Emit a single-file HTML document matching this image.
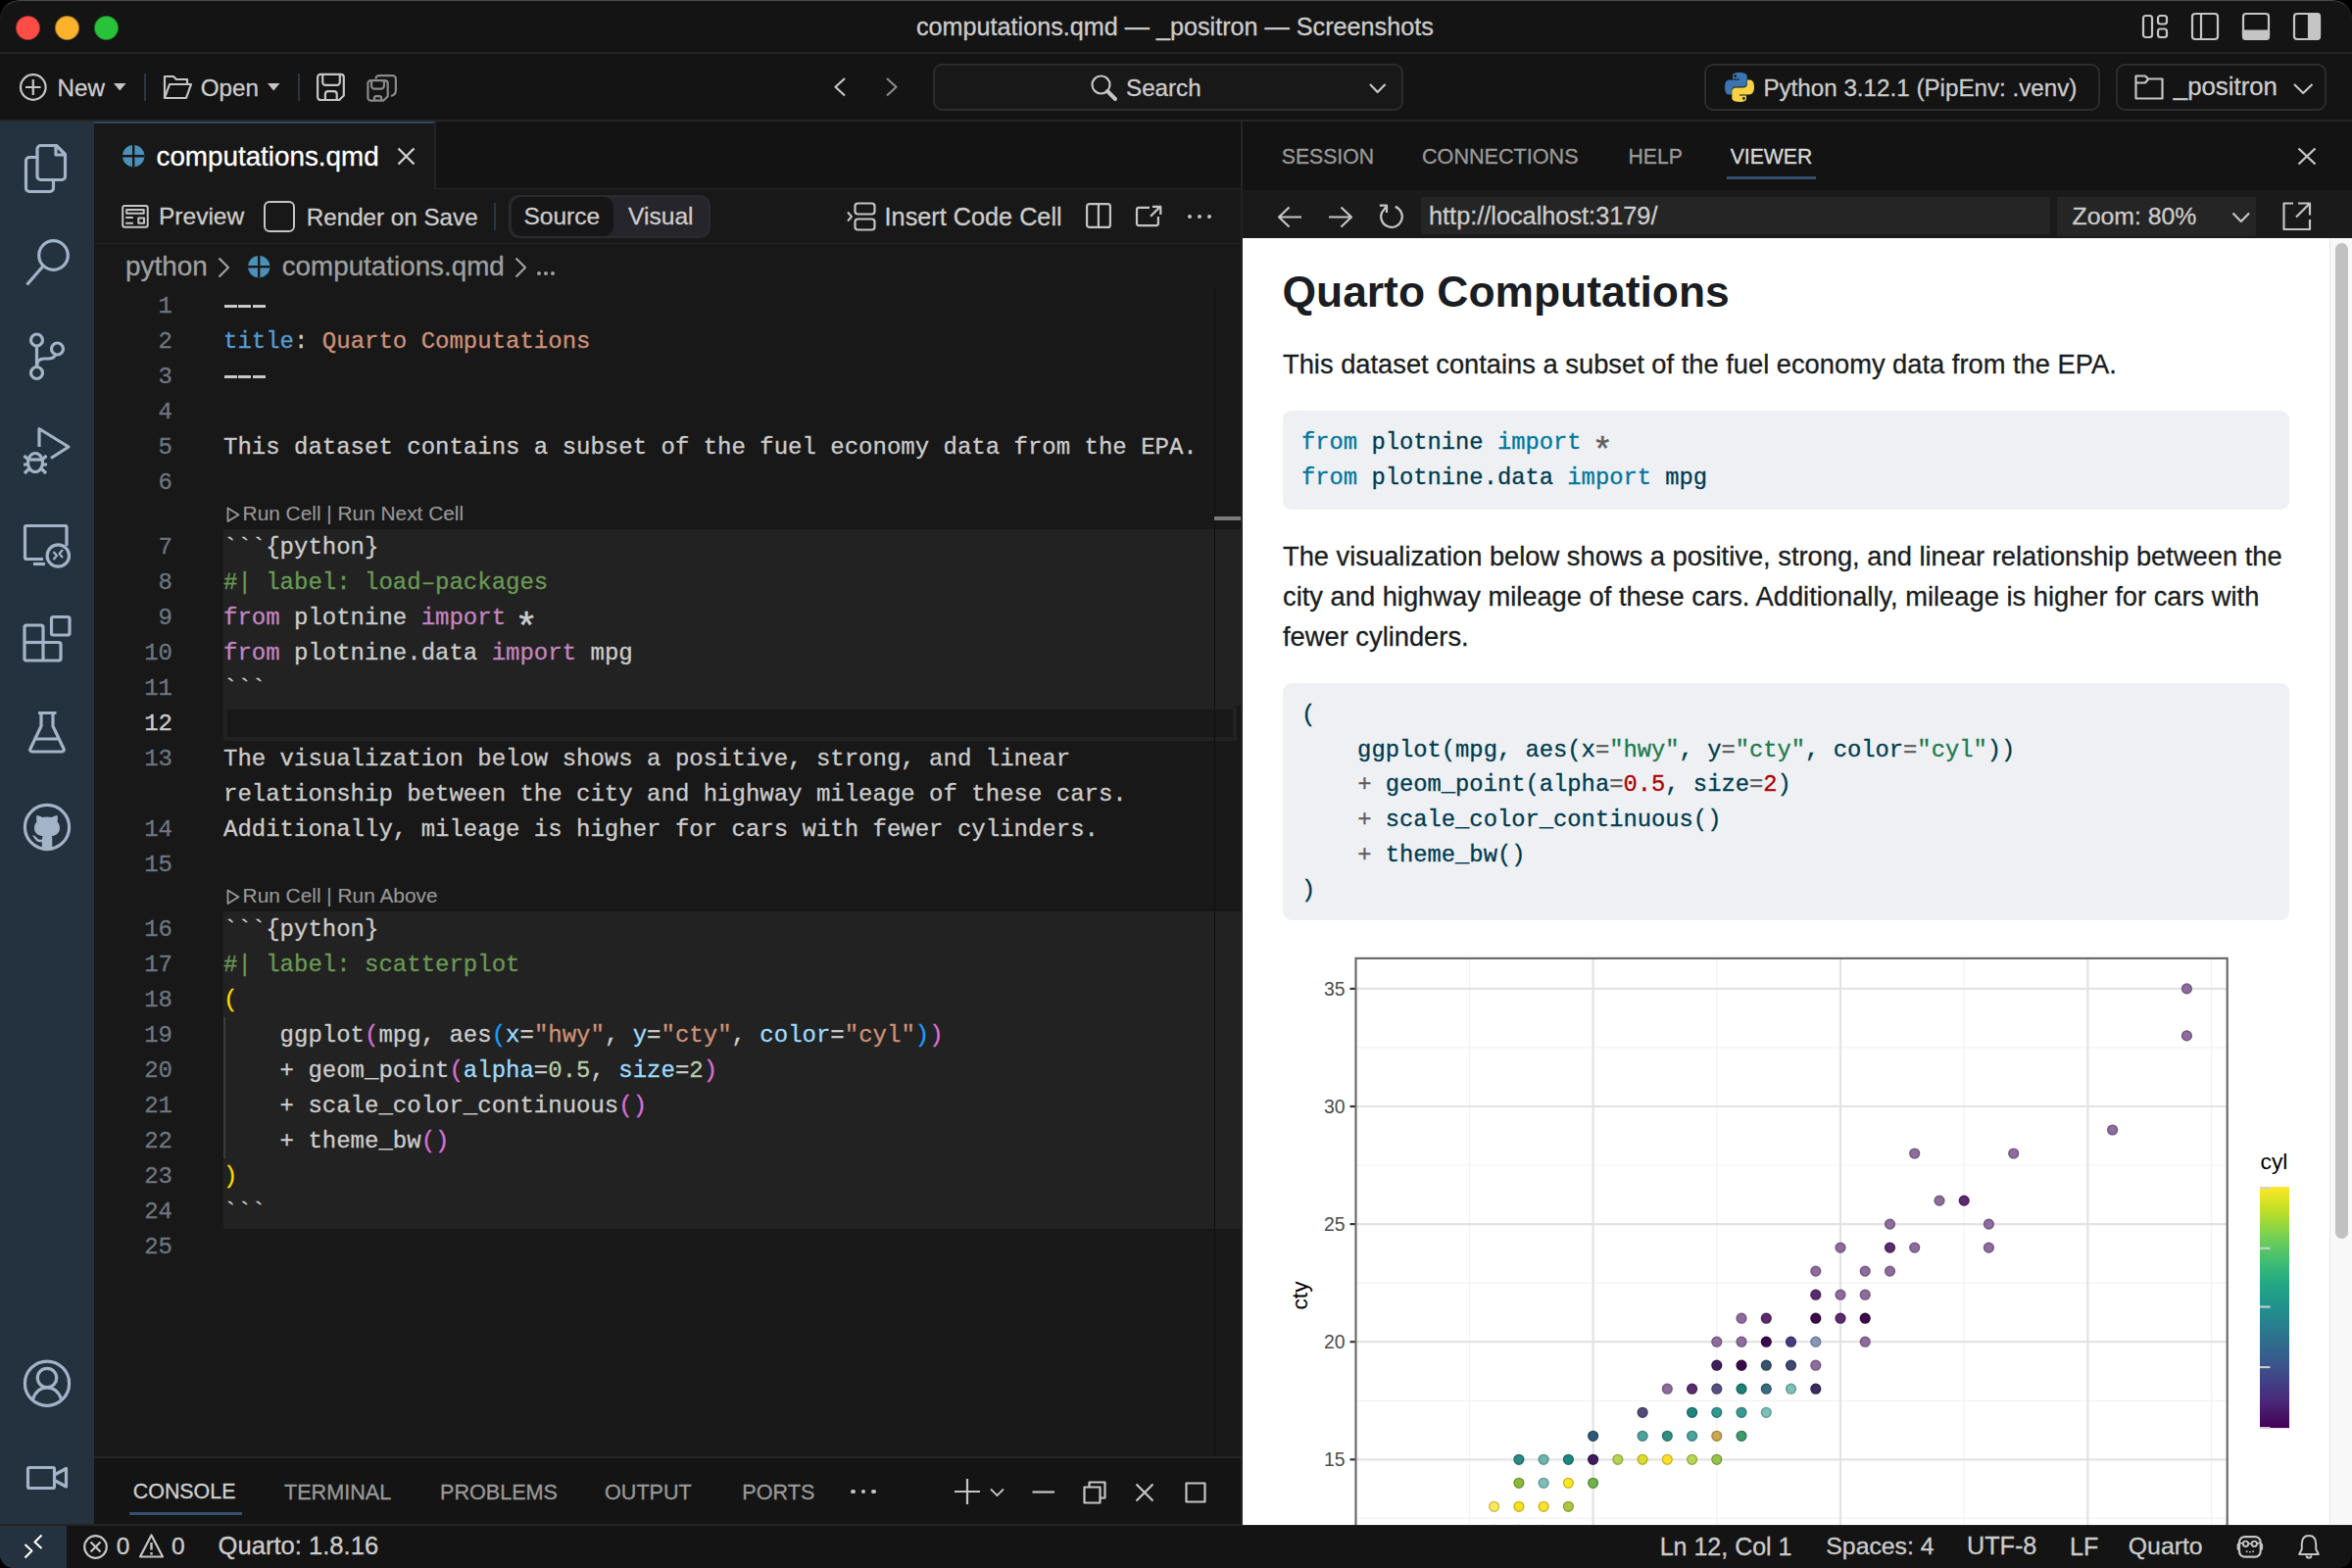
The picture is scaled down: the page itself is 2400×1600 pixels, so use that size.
<!DOCTYPE html>
<html><head><meta charset="utf-8">
<style>
*{box-sizing:border-box;margin:0;padding:0}
html,body{width:2400px;height:1600px;overflow:hidden;background:#000;font-family:"Liberation Sans",sans-serif}
.win{position:absolute;left:0;top:0;width:2400px;height:1600px;border-radius:20px 20px 14px 14px;overflow:hidden;background:#141414}
.wb{position:absolute;left:0;top:0;width:2400px;height:40px;border-radius:20px 20px 0 0;border-top:1.5px solid #4a4a4a;z-index:5;pointer-events:none}
.a{position:absolute}
.t{position:absolute;white-space:pre;line-height:1;-webkit-text-stroke:0.3px currentColor}
svg{position:absolute;overflow:visible}
.ic{fill:none;stroke:#c5c5c5;stroke-width:2.2;stroke-linecap:butt;stroke-linejoin:round}
.ab{fill:none;stroke:#a3b4c6;stroke-width:3.2;stroke-linecap:butt;stroke-linejoin:round}
.k{color:#c586c0}.s{color:#ce9178}.c{color:#6a9955}.p{color:#9cdcfe}.n{color:#b5cea8}.y{color:#569cd6}
.b1{color:#ffd700}.b2{color:#da70d6}.b3{color:#179fff}
.vk{color:#00769e}.vo{color:#5e5e5e}.vs{color:#20794d}.vn{color:#ad0000}
</style></head><body>
<div class="win">

<div class="wb"></div>
<div class="a" style="left:0px;top:0px;width:2400px;height:55px;background:#141414"></div>
<div class="a" style="left:0px;top:53px;width:2400px;height:2px;background:#242424"></div>
<div class="a" style="left:15.5px;top:15.5px;width:25px;height:25px;border-radius:50%;background:#fe4c47;border:0.8px solid rgba(0,0,0,0.35)"></div>
<div class="a" style="left:55.5px;top:15.5px;width:25px;height:25px;border-radius:50%;background:#fdb22b;border:0.8px solid rgba(0,0,0,0.35)"></div>
<div class="a" style="left:95.5px;top:15.5px;width:25px;height:25px;border-radius:50%;background:#28c33b;border:0.8px solid rgba(0,0,0,0.35)"></div>
<div class="t" style="left:935.0px;top:14.9px;font-size:25.2px;color:#cccccc;font-weight:normal;font-family:'Liberation Sans',sans-serif;">computations.qmd — _positron — Screenshots</div>
<svg class="ic" style="left:2186px;top:15px" width="26" height="24" viewBox="0 0 26 24"><rect x="1" y="1" width="9" height="22" rx="2.5"/><rect x="16" y="1" width="9" height="8.5" rx="2.5"/><rect x="16" y="14.5" width="9" height="8.5" rx="2.5"/></svg>
<svg class="ic" style="left:2236px;top:13px" width="28" height="28" viewBox="0 0 28 28"><rect x="1" y="1" width="26" height="26" rx="3"/><line x1="10" y1="1" x2="10" y2="27"/></svg>
<svg class="ic" style="left:2288px;top:13px" width="28" height="28" viewBox="0 0 28 28"><rect x="1" y="1" width="26" height="26" rx="3"/><path d="M1 18.5 H27 V24 a3 3 0 0 1 -3 3 H4 a3 3 0 0 1 -3 -3 Z" fill="#c5c5c5"/></svg>
<svg class="ic" style="left:2340px;top:13px" width="28" height="28" viewBox="0 0 28 28"><rect x="1" y="1" width="26" height="26" rx="3"/><path d="M16 1 H24 a3 3 0 0 1 3 3 V24 a3 3 0 0 1 -3 3 H16 Z" fill="#c5c5c5"/></svg>
<div class="a" style="left:0px;top:55px;width:2400px;height:68px;background:#141414"></div>
<div class="a" style="left:0px;top:122px;width:2400px;height:2px;background:#252525"></div>
<svg class="ic" style="left:19px;top:74px" width="30" height="30" viewBox="0 0 30 30"><circle cx="14.8" cy="15" r="12.8"/><line x1="14.8" y1="7" x2="14.8" y2="23"/><line x1="7" y1="15" x2="22.6" y2="15"/></svg>
<div class="t" style="left:58.5px;top:77.5px;font-size:24.2px;color:#cccccc;font-weight:normal;font-family:'Liberation Sans',sans-serif;">New</div>
<svg class="ic" style="left:116px;top:85px" width="13" height="8" viewBox="0 0 13 8"><path d="M0 0 H12.5 L6.25 7.5 Z" fill="#c5c5c5" stroke="none"/></svg>
<div class="a" style="left:147px;top:75px;width:2px;height:28px;background:#2b3540"></div>
<svg class="ic" style="left:166px;top:76px" width="30" height="26" viewBox="0 0 30 26"><path d="M2 24 V2 H11 L14 5 H25 V9"/><path d="M2 24 L7 10 H29 L24 24 Z"/></svg>
<div class="t" style="left:204.7px;top:77.5px;font-size:24.2px;color:#cccccc;font-weight:normal;font-family:'Liberation Sans',sans-serif;">Open</div>
<svg class="ic" style="left:273px;top:85px" width="13" height="8" viewBox="0 0 13 8"><path d="M0 0 H12.5 L6.25 7.5 Z" fill="#c5c5c5" stroke="none"/></svg>
<div class="a" style="left:304px;top:75px;width:2px;height:28px;background:#2b3540"></div>
<svg class="ic" style="left:323px;top:74px" width="30" height="30" viewBox="0 0 30 30"><path d="M4.1 1.9 H24.8 a3 3 0 0 1 3 3 V23.5 L23.2 28 H4.1 a3 3 0 0 1 -3 -3 V4.9 a3 3 0 0 1 3 -3 Z"/><path d="M6.2 1.9 V9.8 a3 3 0 0 0 3 3 H20.8 a3 3 0 0 0 3 -3 V1.9"/><path d="M8.9 28 V22.2 a3 3 0 0 1 3 -3 H17.7 a3 3 0 0 1 3 3 V28"/></svg>
<svg class="ic" style="left:373px;top:74px" width="34" height="30" viewBox="0 0 34 30"><g stroke="#8a8a8a"><path d="M5.4 8.2 H19.7 a3 3 0 0 1 3 3 V24.2 L18.2 28.7 H5.4 a3 3 0 0 1 -3 -3 V11.2 a3 3 0 0 1 3 -3 Z"/><path d="M6.1 8.2 V13.6 a3 3 0 0 0 3 3 H15.9 a3 3 0 0 0 3 -3 V8.2"/><path d="M9 28.7 V26.1 a2 2 0 0 1 2 -2 H14.1 a2 2 0 0 1 2 2 V28.7"/><path d="M10.4 6.5 a3.5 3.5 0 0 1 3.5 -3.4 H27.4 a3.5 3.5 0 0 1 3.5 3.5 V18 a6 6 0 0 1 -4.8 5.8"/></g></svg>
<svg class="ic" style="left:851px;top:79px" width="12" height="20" viewBox="0 0 12 20"><path d="M11 1 L1.5 9.7 L11 18.5"/></svg>
<svg class="ic" style="left:904px;top:79px" width="12" height="20" viewBox="0 0 12 20"><path d="M1 1 L10.5 9.7 L1 18.5" stroke="#8a8a8a"/></svg>
<div class="a" style="left:952px;top:65px;width:480px;height:48px;border:2px solid #2c2c2c;border-radius:9px;background:#181818"></div>
<svg class="ic" style="left:1113px;top:76px" width="27" height="26" viewBox="0 0 27 26"><circle cx="10.5" cy="10.5" r="9"/><line x1="17" y1="17" x2="25" y2="25" stroke-width="4" stroke-linecap="round"/></svg>
<div class="t" style="left:1149.0px;top:77.9px;font-size:24.2px;color:#cccccc;font-weight:normal;font-family:'Liberation Sans',sans-serif;">Search</div>
<svg class="ic" style="left:1397px;top:85px" width="18" height="10" viewBox="0 0 18 10"><path d="M1 1 L8.7 9 L16.5 1"/></svg>
<div class="a" style="left:1739px;top:65px;width:404px;height:48px;border:2px solid #2c2c2c;border-radius:9px"></div>
<svg style="left:1759px;top:73px" width="32" height="32" viewBox="0 0 32 32">
<path d="M15.7 1 C8.5 1 9 4.2 9 4.2 V7.6 H16 V8.6 H6 C6 8.6 1 8 1 15.9 C1 23.8 5.4 23.5 5.4 23.5 H8 V19.8 C8 19.8 7.9 15.5 12.3 15.5 H19.6 C19.6 15.5 23.7 15.6 23.7 11.5 V4.8 C23.7 4.8 24.3 1 15.7 1 Z M11.6 3.3 A1.3 1.3 0 1 1 11.6 5.9 A1.3 1.3 0 1 1 11.6 3.3 Z" fill="#3a75b0"/>
<path d="M16.3 31 C23.5 31 23 27.8 23 27.8 V24.4 H16 V23.4 H26 C26 23.4 31 24 31 16.1 C31 8.2 26.6 8.5 26.6 8.5 H24 V12.2 C24 12.2 24.1 16.5 19.7 16.5 H12.4 C12.4 16.5 8.3 16.4 8.3 20.5 V27.2 C8.3 27.2 7.7 31 16.3 31 Z M20.4 28.7 A1.3 1.3 0 1 1 20.4 26.1 A1.3 1.3 0 1 1 20.4 28.7 Z" fill="#f7d244"/>
</svg>
<div class="t" style="left:1799.4px;top:77.7px;font-size:24.2px;color:#cccccc;font-weight:normal;font-family:'Liberation Sans',sans-serif;">Python 3.12.1 (PipEnv: .venv)</div>
<div class="a" style="left:2159px;top:65px;width:215px;height:48px;border:2px solid #2c2c2c;border-radius:9px"></div>
<svg class="ic" style="left:2178px;top:76px" width="30" height="26" viewBox="0 0 30 26"><path d="M1.5 24.5 V1.5 H11 L14 4.5 H28.5 V24.5 Z"/><path d="M1.5 8.5 H11 L14 5"/></svg>
<div class="t" style="left:2217.8px;top:75.9px;font-size:25.8px;color:#cccccc;font-weight:normal;font-family:'Liberation Sans',sans-serif;">_positron</div>
<svg class="ic" style="left:2340px;top:85px" width="21" height="11" viewBox="0 0 21 11"><path d="M1 1 L10.2 10 L19.5 1"/></svg>
<div class="a" style="left:0px;top:124px;width:96px;height:1432px;background:#24313f"></div>
<svg class="ab" style="left:0px;top:0px" width="96" height="1600" viewBox="0 0 96 1600">
<path d="M38 160.5 H30 a3.5 3.5 0 0 0 -3.5 3.5 V192 a3.5 3.5 0 0 0 3.5 3.5 H51 a3.5 3.5 0 0 0 3.5 -3.5 V183.5"/>
<path d="M41.5 148.5 H57.5 L66.5 157.5 V180 a3.5 3.5 0 0 1 -3.5 3.5 H41.5 a3.5 3.5 0 0 1 -3.5 -3.5 V152 a3.5 3.5 0 0 1 3.5 -3.5 Z"/>
<path d="M57 149 V158 H66"/>
<circle cx="54.5" cy="260.5" r="14.8"/><line x1="44" y1="271.5" x2="27.5" y2="290.5"/>
<circle cx="37.5" cy="347" r="6"/><circle cx="58.5" cy="356" r="6"/><circle cx="37.5" cy="380.5" r="6"/>
<line x1="37.5" y1="353" x2="37.5" y2="374.5"/><path d="M37.5 374 C37.5 369 40 366 45 366 H49 C53 366 56 364 57 361.5"/>
<path d="M40 456 V437.5 L70 456 L52 467.5"/>
<ellipse cx="36" cy="472" rx="7.5" ry="9.5"/><line x1="28.5" y1="469" x2="43.5" y2="469"/>
<path d="M24.5 465 L29 469 M47.5 465 L43 469 M24 474 H28.5 M48 474 H43.5 M25 483 L29.5 478.5 M47 483 L42.5 478.5"/>
<path d="M68 557 V538 a1.5 1.5 0 0 0 -1.5 -1.5 H27 a1.5 1.5 0 0 0 -1.5 1.5 V569 a1.5 1.5 0 0 0 1.5 1.5 H44"/>
<line x1="34" y1="575.5" x2="46" y2="575.5"/>
<circle cx="59.3" cy="567" r="11.2"/>
<path d="M54.5 563 L58 567 L54.5 571 M64 561 L60.5 565 L64 569" stroke-width="2.2"/>
<path d="M26 638 H42 a2 2 0 0 1 2 2 V655.5 H60 a2 2 0 0 1 2 2 V672 a2 2 0 0 1 -2 2 H27 a2 2 0 0 1 -2 -2 V640 a2 2 0 0 1 2 -2 Z"/>
<line x1="25" y1="655.5" x2="44" y2="655.5"/><line x1="44" y1="655.5" x2="44" y2="674"/>
<rect x="52.5" y="629.5" width="18.5" height="18.5" rx="2"/>
<path d="M39 727.5 H57.5 M42 727.5 V741 L31 764 a2 2 0 0 0 1.8 3 H63.2 a2 2 0 0 0 1.8 -3 L54 741 V727.5 M35 754 H61"/>
<circle cx="48" cy="844" r="22.6"/>
<circle cx="48" cy="1411.7" r="22.6"/><circle cx="48" cy="1406" r="9.7"/>
<path d="M33.5 1428 C36 1420 41.5 1416 48 1416 C54.5 1416 60 1420 62.5 1428"/>
<rect x="28.5" y="1497.5" width="27" height="21" rx="1.5"/><path d="M55.5 1505 L67.5 1498.5 V1517 L55.5 1510.5"/>
</svg>
<svg style="left:0;top:0" width="96" height="1600" viewBox="0 0 96 1600"><path fill="#a3b4c6" d="M37.5 838.5 C37 836 37 833.5 37.5 832 C39.5 832.3 41.5 833 43 834 C46.3 833.3 49.7 833.3 53 834 C54.5 833 56.5 832.3 58.5 832 C59 833.5 59 836 58.5 838.5 C60.3 840.3 61 842.5 61 845 C61 850 57.5 852.5 52.5 853.3 C53.2 854 53.3 855 53.3 856.5 V866 H42.8 V859.3 C40 859.6 37.5 859 35.8 856.6 C34.8 855 33.8 853 32.9 852.5 C35 852 36.5 853.5 37.7 855 C38.8 856.5 40.5 857 42.8 856.8 C43 855 43.5 854 43.8 853.3 C38.5 852.5 35 850 35 845 C35 842.5 35.8 840.3 37.5 838.5 Z"/></svg>
<div class="a" style="left:96px;top:124px;width:1170px;height:70px;background:#131313"></div>
<div class="a" style="left:443px;top:124px;width:823px;height:70px;border-left:2px solid #222222;border-bottom:2px solid #242424"></div>
<div class="a" style="left:96px;top:124px;width:347px;height:70px;background:#181818"></div>
<div class="a" style="left:96px;top:124px;width:347px;height:2px;background:#2d4661"></div>
<svg style="left:125px;top:148px" width="22.4" height="22.4" viewBox="0 0 22.4 22.4"><circle cx="11.2" cy="11.2" r="11.2" fill="#4a90b8"/><line x1="11.2" y1="0" x2="11.2" y2="22.4" stroke="#181818" stroke-width="2.4"/><line x1="0" y1="11.2" x2="22.4" y2="11.2" stroke="#181818" stroke-width="2.4"/></svg>
<div class="t" style="left:159.5px;top:145.8px;font-size:27.8px;color:#ffffff;font-weight:normal;font-family:'Liberation Sans',sans-serif;">computations.qmd</div>
<svg class="ic" style="left:405px;top:150px" width="19" height="19" viewBox="0 0 19 19"><path d="M1.5 1.5 L17.5 17.5 M17.5 1.5 L1.5 17.5" stroke="#d0d0d0" stroke-width="2.4"/></svg>
<div class="a" style="left:96px;top:193px;width:1170px;height:56px;background:#181818"></div>
<div class="a" style="left:96px;top:248px;width:1170px;height:2px;background:#242424"></div>
<svg class="ic" style="left:123px;top:208px" width="30" height="26" viewBox="0 0 30 26"><rect x="2.2" y="2" width="25.5" height="21.8" rx="2" stroke-width="2"/><rect x="6.2" y="5.9" width="17.5" height="3.9" stroke-width="2"/><path d="M5.2 14 H12.9 M5.2 19.7 H12.9" stroke-width="2"/><rect x="18.3" y="14.4" width="5.7" height="5.4" stroke-width="2"/></svg>
<div class="t" style="left:162.0px;top:209.3px;font-size:24.5px;color:#cccccc;font-weight:normal;font-family:'Liberation Sans',sans-serif;">Preview</div>
<div class="a" style="left:269px;top:205px;width:32px;height:32px;border:2.2px solid #c5c5c5;border-radius:6px"></div>
<div class="t" style="left:312.8px;top:209.5px;font-size:24.2px;color:#cccccc;font-weight:normal;font-family:'Liberation Sans',sans-serif;">Render on Save</div>
<div class="a" style="left:503.5px;top:207px;width:2px;height:28px;background:#2b3540"></div>
<div class="a" style="left:519px;top:199px;width:206px;height:44px;background:#25252b;border:2px solid #2a2a30;border-radius:11px"></div>
<div class="a" style="left:522px;top:201px;width:104px;height:40px;background:#161616;border-radius:10px"></div>
<div class="t" style="left:534.4px;top:209.2px;font-size:24.55px;color:#cccccc;font-weight:normal;font-family:'Liberation Sans',sans-serif;">Source</div>
<div class="t" style="left:641.0px;top:209.2px;font-size:24.6px;color:#cccccc;font-weight:normal;font-family:'Liberation Sans',sans-serif;">Visual</div>
<svg class="ic" style="left:863px;top:206px" width="32" height="30" viewBox="0 0 32 30"><path d="M2 10.5 L6 15 L2 19.5" stroke-width="2"/><rect x="9.5" y="1.5" width="20" height="11" rx="3"/><rect x="9.5" y="17.5" width="20" height="11" rx="3"/></svg>
<div class="t" style="left:902.6px;top:208.6px;font-size:25.25px;color:#cccccc;font-weight:normal;font-family:'Liberation Sans',sans-serif;">Insert Code Cell</div>
<svg class="ic" style="left:1108px;top:207px" width="26" height="26" viewBox="0 0 26 26"><rect x="1.1" y="1.1" width="23.8" height="23.8" rx="2.5"/><line x1="12.9" y1="1.1" x2="12.9" y2="24.9"/></svg>
<svg class="ic" style="left:1158px;top:208px" width="28" height="24" viewBox="0 0 28 24"><path d="M15 3.8 H4 a2 2 0 0 0 -2 2 V20.1 a2 2 0 0 0 2 2 H21.9 a2 2 0 0 0 2 -2 V13"/><path d="M16 12.7 L25.8 2.9"/><path d="M17.9 2.9 H26.3 V11"/></svg>
<div class="a" style="left:1211.6px;top:218.8px;width:4.4px;height:4.4px;border-radius:50%;background:#c5c5c5"></div>
<div class="a" style="left:1221.6px;top:218.8px;width:4.4px;height:4.4px;border-radius:50%;background:#c5c5c5"></div>
<div class="a" style="left:1231.7px;top:218.8px;width:4.4px;height:4.4px;border-radius:50%;background:#c5c5c5"></div>
<div class="a" style="left:96px;top:249px;width:1170px;height:1238px;background:#181818"></div>
<div class="t" style="left:128.0px;top:257.9px;font-size:27.9px;color:#a0a0a0;font-weight:normal;font-family:'Liberation Sans',sans-serif;">python</div>
<svg class="ic" style="left:222px;top:262px" width="13" height="22" viewBox="0 0 13 22"><path d="M1.5 1.5 L11 11 L1.5 20.5" stroke="#a0a0a0"/></svg>
<svg style="left:253px;top:260.8px" width="22.4" height="22.4" viewBox="0 0 22.4 22.4"><circle cx="11.2" cy="11.2" r="11.2" fill="#4a90b8"/><line x1="11.2" y1="0" x2="11.2" y2="22.4" stroke="#181818" stroke-width="2.4"/><line x1="0" y1="11.2" x2="22.4" y2="11.2" stroke="#181818" stroke-width="2.4"/></svg>
<div class="t" style="left:287.7px;top:258.0px;font-size:27.8px;color:#a0a0a0;font-weight:normal;font-family:'Liberation Sans',sans-serif;">computations.qmd</div>
<svg class="ic" style="left:525px;top:262px" width="13" height="22" viewBox="0 0 13 22"><path d="M1.5 1.5 L11 11 L1.5 20.5" stroke="#a0a0a0"/></svg>
<div class="a" style="left:548px;top:277px;width:4px;height:4px;border-radius:50%;background:#a0a0a0"></div>
<div class="a" style="left:555px;top:277px;width:4px;height:4px;border-radius:50%;background:#a0a0a0"></div>
<div class="a" style="left:562px;top:277px;width:4px;height:4px;border-radius:50%;background:#a0a0a0"></div>
<div class="a" style="left:228px;top:540px;width:1038px;height:180px;background:#222222"></div>
<div class="a" style="left:228px;top:930px;width:1038px;height:324px;background:#222222"></div>
<div class="a" style="left:228px;top:720px;width:1034px;height:36px;border:4px solid #222222;background:#181818"></div>
<div class="a" style="left:228px;top:1038px;width:2px;height:144px;background:#3c3c3c"></div>
<div class="a" style="left:1238.5px;top:294px;width:1.5px;height:1193px;background:#101010"></div>
<div class="a" style="left:1239px;top:527px;width:27px;height:4px;background:#7a7a7a"></div>
<div class="t" style="left:96px;width:80px;text-align:right;top:301.3px;font-size:24px;font-family:'Liberation Mono',monospace;color:#6e7681">1</div>
<div class="t" style="left:96px;width:80px;text-align:right;top:337.3px;font-size:24px;font-family:'Liberation Mono',monospace;color:#6e7681">2</div>
<div class="t" style="left:96px;width:80px;text-align:right;top:373.3px;font-size:24px;font-family:'Liberation Mono',monospace;color:#6e7681">3</div>
<div class="t" style="left:96px;width:80px;text-align:right;top:409.3px;font-size:24px;font-family:'Liberation Mono',monospace;color:#6e7681">4</div>
<div class="t" style="left:96px;width:80px;text-align:right;top:445.3px;font-size:24px;font-family:'Liberation Mono',monospace;color:#6e7681">5</div>
<div class="t" style="left:96px;width:80px;text-align:right;top:481.3px;font-size:24px;font-family:'Liberation Mono',monospace;color:#6e7681">6</div>
<div class="t" style="left:96px;width:80px;text-align:right;top:547.3px;font-size:24px;font-family:'Liberation Mono',monospace;color:#6e7681">7</div>
<div class="t" style="left:96px;width:80px;text-align:right;top:583.3px;font-size:24px;font-family:'Liberation Mono',monospace;color:#6e7681">8</div>
<div class="t" style="left:96px;width:80px;text-align:right;top:619.3px;font-size:24px;font-family:'Liberation Mono',monospace;color:#6e7681">9</div>
<div class="t" style="left:96px;width:80px;text-align:right;top:655.3px;font-size:24px;font-family:'Liberation Mono',monospace;color:#6e7681">10</div>
<div class="t" style="left:96px;width:80px;text-align:right;top:691.3px;font-size:24px;font-family:'Liberation Mono',monospace;color:#6e7681">11</div>
<div class="t" style="left:96px;width:80px;text-align:right;top:727.3px;font-size:24px;font-family:'Liberation Mono',monospace;color:#cccccc">12</div>
<div class="t" style="left:96px;width:80px;text-align:right;top:763.3px;font-size:24px;font-family:'Liberation Mono',monospace;color:#6e7681">13</div>
<div class="t" style="left:96px;width:80px;text-align:right;top:835.3px;font-size:24px;font-family:'Liberation Mono',monospace;color:#6e7681">14</div>
<div class="t" style="left:96px;width:80px;text-align:right;top:871.3px;font-size:24px;font-family:'Liberation Mono',monospace;color:#6e7681">15</div>
<div class="t" style="left:96px;width:80px;text-align:right;top:937.3px;font-size:24px;font-family:'Liberation Mono',monospace;color:#6e7681">16</div>
<div class="t" style="left:96px;width:80px;text-align:right;top:973.3px;font-size:24px;font-family:'Liberation Mono',monospace;color:#6e7681">17</div>
<div class="t" style="left:96px;width:80px;text-align:right;top:1009.3px;font-size:24px;font-family:'Liberation Mono',monospace;color:#6e7681">18</div>
<div class="t" style="left:96px;width:80px;text-align:right;top:1045.3px;font-size:24px;font-family:'Liberation Mono',monospace;color:#6e7681">19</div>
<div class="t" style="left:96px;width:80px;text-align:right;top:1081.3px;font-size:24px;font-family:'Liberation Mono',monospace;color:#6e7681">20</div>
<div class="t" style="left:96px;width:80px;text-align:right;top:1117.3px;font-size:24px;font-family:'Liberation Mono',monospace;color:#6e7681">21</div>
<div class="t" style="left:96px;width:80px;text-align:right;top:1153.3px;font-size:24px;font-family:'Liberation Mono',monospace;color:#6e7681">22</div>
<div class="t" style="left:96px;width:80px;text-align:right;top:1189.3px;font-size:24px;font-family:'Liberation Mono',monospace;color:#6e7681">23</div>
<div class="t" style="left:96px;width:80px;text-align:right;top:1225.3px;font-size:24px;font-family:'Liberation Mono',monospace;color:#6e7681">24</div>
<div class="t" style="left:96px;width:80px;text-align:right;top:1261.3px;font-size:24px;font-family:'Liberation Mono',monospace;color:#6e7681">25</div>
<div class="a" style="left:228.9px;top:310.8px;width:12.9px;height:3px;background:#c8c8c8"></div>
<div class="a" style="left:243.4px;top:310.8px;width:12.9px;height:3px;background:#c8c8c8"></div>
<div class="a" style="left:258.1px;top:310.8px;width:12.9px;height:3px;background:#c8c8c8"></div>
<div class="a" style="left:228.9px;top:382.8px;width:12.9px;height:3px;background:#c8c8c8"></div>
<div class="a" style="left:243.4px;top:382.8px;width:12.9px;height:3px;background:#c8c8c8"></div>
<div class="a" style="left:258.1px;top:382.8px;width:12.9px;height:3px;background:#c8c8c8"></div>
<div class="t" style="left:228px;top:301.3px;font-size:24px;font-family:'Liberation Mono',monospace;color:#cccccc"></div>
<div class="t" style="left:228px;top:337.3px;font-size:24px;font-family:'Liberation Mono',monospace;color:#cccccc"><span class="y">title</span>: <span class="s">Quarto Computations</span></div>
<div class="t" style="left:228px;top:373.3px;font-size:24px;font-family:'Liberation Mono',monospace;color:#cccccc"></div>
<div class="t" style="left:228px;top:445.3px;font-size:24px;font-family:'Liberation Mono',monospace;color:#cccccc">This dataset contains a subset of the fuel economy data from the EPA.</div>
<div class="t" style="left:228px;top:547.3px;font-size:24px;font-family:'Liberation Mono',monospace;color:#cccccc">```{python}</div>
<div class="t" style="left:228px;top:583.3px;font-size:24px;font-family:'Liberation Mono',monospace;color:#cccccc"><span class="c">#| label: load–packages</span></div>
<div class="t" style="left:228px;top:619.3px;font-size:24px;font-family:'Liberation Mono',monospace;color:#cccccc"><span class="k">from</span> plotnine <span class="k">import</span> <span style="display:inline-block;transform:translateY(11.2px) scale(1.65)">*</span></div>
<div class="t" style="left:228px;top:655.3px;font-size:24px;font-family:'Liberation Mono',monospace;color:#cccccc"><span class="k">from</span> plotnine.data <span class="k">import</span> mpg</div>
<div class="t" style="left:228px;top:691.3px;font-size:24px;font-family:'Liberation Mono',monospace;color:#cccccc">```</div>
<div class="t" style="left:228px;top:763.3px;font-size:24px;font-family:'Liberation Mono',monospace;color:#cccccc">The visualization below shows a positive, strong, and linear</div>
<div class="t" style="left:228px;top:835.3px;font-size:24px;font-family:'Liberation Mono',monospace;color:#cccccc">Additionally, mileage is higher for cars with fewer cylinders.</div>
<div class="t" style="left:228px;top:937.3px;font-size:24px;font-family:'Liberation Mono',monospace;color:#cccccc">```{python}</div>
<div class="t" style="left:228px;top:973.3px;font-size:24px;font-family:'Liberation Mono',monospace;color:#cccccc"><span class="c">#| label: scatterplot</span></div>
<div class="t" style="left:228px;top:1009.3px;font-size:24px;font-family:'Liberation Mono',monospace;color:#cccccc"><span class="b1">(</span></div>
<div class="t" style="left:228px;top:1045.3px;font-size:24px;font-family:'Liberation Mono',monospace;color:#cccccc">    ggplot<span class="b2">(</span>mpg, aes<span class="b3">(</span><span class="p">x</span>=<span class="s">"hwy"</span>, <span class="p">y</span>=<span class="s">"cty"</span>, <span class="p">color</span>=<span class="s">"cyl"</span><span class="b3">)</span><span class="b2">)</span></div>
<div class="t" style="left:228px;top:1081.3px;font-size:24px;font-family:'Liberation Mono',monospace;color:#cccccc">    + geom_point<span class="b2">(</span><span class="p">alpha</span>=<span class="n">0.5</span>, <span class="p">size</span>=<span class="n">2</span><span class="b2">)</span></div>
<div class="t" style="left:228px;top:1117.3px;font-size:24px;font-family:'Liberation Mono',monospace;color:#cccccc">    + scale_color_continuous<span class="b2">()</span></div>
<div class="t" style="left:228px;top:1153.3px;font-size:24px;font-family:'Liberation Mono',monospace;color:#cccccc">    + theme_bw<span class="b2">()</span></div>
<div class="t" style="left:228px;top:1189.3px;font-size:24px;font-family:'Liberation Mono',monospace;color:#cccccc"><span class="b1">)</span></div>
<div class="t" style="left:228px;top:1225.3px;font-size:24px;font-family:'Liberation Mono',monospace;color:#cccccc">```</div>
<div class="t" style="left:228px;top:799.3px;font-size:24px;font-family:'Liberation Mono',monospace;color:#cccccc">relationship between the city and highway mileage of these cars.</div>
<svg class="ic" style="left:231px;top:517px" width="14" height="17" viewBox="0 0 14 17"><path d="M1.5 1.5 L12.5 8.2 L1.5 15 Z" stroke="#999999" stroke-width="1.8"/></svg>
<div class="t" style="left:247.6px;top:514.1px;font-size:20.85px;color:#999999;font-weight:normal;font-family:'Liberation Sans',sans-serif;-webkit-text-stroke:0.1px currentColor">Run Cell | Run Next Cell</div>
<svg class="ic" style="left:231px;top:907px" width="14" height="17" viewBox="0 0 14 17"><path d="M1.5 1.5 L12.5 8.2 L1.5 15 Z" stroke="#999999" stroke-width="1.8"/></svg>
<div class="t" style="left:247.6px;top:904.1px;font-size:20.85px;color:#999999;font-weight:normal;font-family:'Liberation Sans',sans-serif;-webkit-text-stroke:0.1px currentColor">Run Cell | Run Above</div>
<div class="a" style="left:96px;top:1487px;width:1170px;height:69px;background:#141414"></div>
<div class="a" style="left:96px;top:1486px;width:1170px;height:2px;background:#242424"></div>
<div class="t" style="left:135.8px;top:1512.1px;font-size:21.4px;color:#d0d0d0;font-weight:normal;font-family:'Liberation Sans',sans-serif;">CONSOLE</div>
<div class="a" style="left:132px;top:1543px;width:115px;height:2.5px;background:#35506e"></div>
<div class="t" style="left:290.0px;top:1511.9px;font-size:21.6px;color:#9a9a9a;font-weight:normal;font-family:'Liberation Sans',sans-serif;">TERMINAL</div>
<div class="t" style="left:449.0px;top:1511.9px;font-size:21.6px;color:#9a9a9a;font-weight:normal;font-family:'Liberation Sans',sans-serif;">PROBLEMS</div>
<div class="t" style="left:617.0px;top:1511.9px;font-size:21.6px;color:#9a9a9a;font-weight:normal;font-family:'Liberation Sans',sans-serif;">OUTPUT</div>
<div class="t" style="left:757.3px;top:1511.9px;font-size:21.6px;color:#9a9a9a;font-weight:normal;font-family:'Liberation Sans',sans-serif;">PORTS</div>
<div class="a" style="left:868.3px;top:1519.8px;width:4.4px;height:4.4px;border-radius:50%;background:#c5c5c5"></div>
<div class="a" style="left:878.8px;top:1519.8px;width:4.4px;height:4.4px;border-radius:50%;background:#c5c5c5"></div>
<div class="a" style="left:889.3px;top:1519.8px;width:4.4px;height:4.4px;border-radius:50%;background:#c5c5c5"></div>
<svg class="ic" style="left:973px;top:1508px" width="28" height="28" viewBox="0 0 28 28"><path d="M14 1 V27 M1 14 H27"/></svg>
<svg class="ic" style="left:1010px;top:1518px" width="16" height="10" viewBox="0 0 16 10"><path d="M1 1.5 L7.5 8 L14 1.5" stroke-width="1.8"/></svg>
<svg class="ic" style="left:1053px;top:1521px" width="24" height="3" viewBox="0 0 24 3"><path d="M0.5 1.5 H23" /></svg>
<svg class="ic" style="left:1105px;top:1511px" width="24" height="24" viewBox="0 0 24 24"><rect x="1.5" y="6.5" width="16" height="16"/><path d="M6.5 6.5 V1.5 H22.5 V17.5 H17.5"/></svg>
<svg class="ic" style="left:1158px;top:1513px" width="20" height="20" viewBox="0 0 20 20"><path d="M1.5 1.5 L18.5 18.5 M18.5 1.5 L1.5 18.5"/></svg>
<svg class="ic" style="left:1209px;top:1512px" width="22" height="22" viewBox="0 0 22 22"><rect x="1.5" y="1.5" width="19" height="19"/></svg>
<div class="a" style="left:0px;top:1556px;width:2400px;height:44px;background:#141414"></div>
<div class="a" style="left:0px;top:1555px;width:2400px;height:2px;background:#242424"></div>
<div class="a" style="left:0px;top:1557px;width:68px;height:43px;background:#24313f"></div>
<svg class="ic" style="left:24px;top:1565px" width="20" height="26" viewBox="0 0 20 26"><path d="M1.5 11 L8.5 17.5 L1.5 24.5 M18.5 1.5 L11.5 8.5 L18.5 15" stroke="#ffffff" stroke-width="2"/></svg>
<svg class="ic" style="left:85px;top:1566px" width="26" height="26" viewBox="0 0 26 26"><circle cx="12.5" cy="12.5" r="11.3"/><path d="M7.5 7.5 L17.5 17.5 M17.5 7.5 L7.5 17.5"/></svg>
<div class="t" style="left:118.8px;top:1566.3px;font-size:24.5px;color:#cccccc;font-weight:normal;font-family:'Liberation Sans',sans-serif;">0</div>
<svg class="ic" style="left:142px;top:1565px" width="26" height="25" viewBox="0 0 26 25"><path d="M12.5 1.5 L24 23.5 H1 Z"/><path d="M12.5 9 V16.5 M12.5 19 V21.5" stroke-width="2.4"/></svg>
<div class="t" style="left:175.0px;top:1566.3px;font-size:24.5px;color:#cccccc;font-weight:normal;font-family:'Liberation Sans',sans-serif;">0</div>
<div class="t" style="left:222.5px;top:1565.3px;font-size:25.6px;color:#cccccc;font-weight:normal;font-family:'Liberation Sans',sans-serif;">Quarto: 1.8.16</div>
<div class="t" style="left:1693.7px;top:1565.5px;font-size:25px;color:#cccccc;font-weight:normal;font-family:'Liberation Sans',sans-serif;">Ln 12, Col 1</div>
<div class="t" style="left:1863.3px;top:1565.7px;font-size:24.8px;color:#cccccc;font-weight:normal;font-family:'Liberation Sans',sans-serif;">Spaces: 4</div>
<div class="t" style="left:2007.0px;top:1565.4px;font-size:25.2px;color:#cccccc;font-weight:normal;font-family:'Liberation Sans',sans-serif;">UTF-8</div>
<div class="t" style="left:2112.0px;top:1565.5px;font-size:25px;color:#cccccc;font-weight:normal;font-family:'Liberation Sans',sans-serif;">LF</div>
<div class="t" style="left:2171.8px;top:1565.7px;font-size:24.8px;color:#cccccc;font-weight:normal;font-family:'Liberation Sans',sans-serif;">Quarto</div>
<svg class="ic" style="left:2281px;top:1566px" width="29" height="25" viewBox="0 0 29 25"><rect x="4" y="2.1" width="21.7" height="20.5" rx="5.5"/><rect x="1.6" y="8.8" width="2.6" height="7" rx="1.3" fill="#c5c5c5" stroke="none"/><rect x="25.5" y="8.8" width="2.6" height="7" rx="1.3" fill="#c5c5c5" stroke="none"/><circle cx="10.5" cy="9.3" r="2.7" stroke-width="1.9"/><circle cx="19.3" cy="9.3" r="2.7" stroke-width="1.9"/><path d="M13.2 9.3 H16.6 M4.5 8.2 L7.8 9.3 M25.2 8.2 L22 9.3" stroke-width="1.6"/><rect x="10.8" y="16.4" width="1.7" height="1.7" fill="#c5c5c5" stroke="none"/><rect x="14" y="16.9" width="1.7" height="1.5" fill="#c5c5c5" stroke="none"/><rect x="17.2" y="16.4" width="1.7" height="1.7" fill="#c5c5c5" stroke="none"/></svg>
<svg class="ic" style="left:2344px;top:1566px" width="24" height="25" viewBox="0 0 24 25"><path d="M12 0.9 C6.8 0.9 4.8 5 4.8 9.5 V14.8 L2.2 20 H21.8 L19.2 14.8 V9.5 C19.2 5 17.2 0.9 12 0.9 Z" stroke-width="2"/><path d="M9.6 21.2 a2.4 2.4 0 0 0 4.8 0" stroke-width="2"/></svg>
<div class="a" style="left:1266px;top:124px;width:2px;height:1432px;background:#242424"></div>
<div class="a" style="left:1268px;top:124px;width:1132px;height:70px;background:#131313"></div>
<div class="t" style="left:1307.8px;top:149.4px;font-size:21.2px;color:#9a9a9a;font-weight:normal;font-family:'Liberation Sans',sans-serif;">SESSION</div>
<div class="t" style="left:1451.0px;top:149.1px;font-size:21.6px;color:#9a9a9a;font-weight:normal;font-family:'Liberation Sans',sans-serif;">CONNECTIONS</div>
<div class="t" style="left:1661.5px;top:149.4px;font-size:21.2px;color:#9a9a9a;font-weight:normal;font-family:'Liberation Sans',sans-serif;">HELP</div>
<div class="t" style="left:1765.7px;top:149.4px;font-size:21.2px;color:#d8d8d8;font-weight:normal;font-family:'Liberation Sans',sans-serif;">VIEWER</div>
<div class="a" style="left:1762px;top:180px;width:91px;height:2.5px;background:#35506e"></div>
<svg class="ic" style="left:2344px;top:150px" width="20" height="19" viewBox="0 0 20 19"><path d="M1.5 1.5 L18.5 17.5 M18.5 1.5 L1.5 17.5" stroke-width="2.4"/></svg>
<div class="a" style="left:1268px;top:194px;width:1132px;height:49px;background:#1a1a1a"></div>
<svg class="ic" style="left:1303px;top:210px" width="26" height="24" viewBox="0 0 26 24"><path d="M25 11.5 H2.5 M12.5 1.5 L2 11.5 L12.5 21.5"/></svg>
<svg class="ic" style="left:1355px;top:210px" width="26" height="24" viewBox="0 0 26 24"><path d="M1 11.5 H23.5 M13.5 1.5 L24 11.5 L13.5 21.5"/></svg>
<svg class="ic" style="left:1406px;top:208px" width="28" height="27" viewBox="0 0 28 27"><path d="M17.7 2.9 A10.8 10.8 0 1 1 4 8.9 L8.8 2.4"/><path d="M1.8 1.7 H9 V9"/></svg>
<div class="a" style="left:1450px;top:201px;width:642px;height:38px;background:#252525"></div>
<div class="t" style="left:1458.0px;top:208.1px;font-size:25.3px;color:#cccccc;font-weight:normal;font-family:'Liberation Sans',sans-serif;">http://localhost:3179/</div>
<div class="a" style="left:2099px;top:201px;width:203px;height:40px;background:#252525"></div>
<div class="t" style="left:2114.6px;top:209.2px;font-size:24.8px;color:#cccccc;font-weight:normal;font-family:'Liberation Sans',sans-serif;">Zoom: 80%</div>
<svg class="ic" style="left:2277px;top:216px" width="20" height="12" viewBox="0 0 20 12"><path d="M1.5 1.5 L9.8 10 L18 1.5"/></svg>
<svg class="ic" style="left:2329px;top:206px" width="30" height="30" viewBox="0 0 30 30"><path d="M11 1.5 H1.5 V28 H28 V18"/><path d="M16 1.5 H28 V13.5 M28 1.5 L14 15.5"/></svg>
<div class="a" style="left:1268px;top:243px;width:1132px;height:1313px;background:#ffffff;overflow:hidden"></div>
<div class="a" style="left:2377px;top:243px;width:23px;height:1313px;background:#f8f8f8;border-left:1.5px solid #e6e6e6"></div>
<div class="a" style="left:2383px;top:248px;width:13px;height:1016px;background:#c1c1c1;border-radius:6.5px"></div>
<div class="t" style="left:1308.5px;top:275.8px;font-size:44.4px;color:#1a1d21;font-weight:bold;font-family:'Liberation Sans',sans-serif;-webkit-text-stroke:0">Quarto Computations</div>
<div class="t" style="left:1309.0px;top:357.6px;font-size:27.3px;color:#1a1d21;font-weight:normal;font-family:'Liberation Sans',sans-serif;">This dataset contains a subset of the fuel economy data from the EPA.</div>
<div class="a" style="left:1309px;top:419px;width:1027px;height:100.5px;background:#eef0f3;border-radius:9px"></div>
<div class="t" style="left:1328px;top:440.3px;font-size:23.8px;font-family:'Liberation Mono',monospace;color:#003b4f"><span class="vk">from</span> plotnine <span class="vk">import</span> <span class="vo" style="display:inline-block;transform:translateY(9.8px) scale(1.5)">*</span></div>
<div class="t" style="left:1328px;top:476.4px;font-size:23.8px;font-family:'Liberation Mono',monospace;color:#003b4f"><span class="vk">from</span> plotnine.data <span class="vk">import</span> mpg</div>
<div class="t" style="left:1309.0px;top:553.5px;font-size:27.3px;color:#1a1d21;font-weight:normal;font-family:'Liberation Sans',sans-serif;">The visualization below shows a positive, strong, and linear relationship between the</div>
<div class="t" style="left:1309.0px;top:594.7px;font-size:27.3px;color:#1a1d21;font-weight:normal;font-family:'Liberation Sans',sans-serif;">city and highway mileage of these cars. Additionally, mileage is higher for cars with</div>
<div class="t" style="left:1309.0px;top:635.9px;font-size:27.3px;color:#1a1d21;font-weight:normal;font-family:'Liberation Sans',sans-serif;">fewer cylinders.</div>
<div class="a" style="left:1309px;top:697px;width:1027px;height:242px;background:#eef0f3;border-radius:9px"></div>
<div class="t" style="left:1328px;top:717.8px;font-size:23.8px;font-family:'Liberation Mono',monospace;color:#003b4f">(</div>
<div class="t" style="left:1328px;top:753.5px;font-size:23.8px;font-family:'Liberation Mono',monospace;color:#003b4f">    ggplot(mpg, aes(x<span class="vo">=</span><span class="vs">"hwy"</span>, y<span class="vo">=</span><span class="vs">"cty"</span>, color<span class="vo">=</span><span class="vs">"cyl"</span>))</div>
<div class="t" style="left:1328px;top:789.3px;font-size:23.8px;font-family:'Liberation Mono',monospace;color:#003b4f">    <span class="vo">+</span> geom_point(alpha<span class="vo">=</span><span class="vn">0.5</span>, size<span class="vo">=</span><span class="vn">2</span>)</div>
<div class="t" style="left:1328px;top:825.0px;font-size:23.8px;font-family:'Liberation Mono',monospace;color:#003b4f">    <span class="vo">+</span> scale_color_continuous()</div>
<div class="t" style="left:1328px;top:860.8px;font-size:23.8px;font-family:'Liberation Mono',monospace;color:#003b4f">    <span class="vo">+</span> theme_bw()</div>
<div class="t" style="left:1328px;top:896.5px;font-size:23.8px;font-family:'Liberation Mono',monospace;color:#003b4f">)</div>
<svg style="left:1268px;top:243px;overflow:hidden" width="1109" height="1313" viewBox="1268 243 1109 1313"><rect x="1383.5" y="977.9" width="889.2" height="720" fill="#ffffff"/><line x1="1499.4" y1="978" x2="1499.4" y2="1600" stroke="#f3f3f3" stroke-width="1.2"/><line x1="1751.8" y1="978" x2="1751.8" y2="1600" stroke="#f3f3f3" stroke-width="1.2"/><line x1="2004.2" y1="978" x2="2004.2" y2="1600" stroke="#f3f3f3" stroke-width="1.2"/><line x1="2256.6" y1="978" x2="2256.6" y2="1600" stroke="#f3f3f3" stroke-width="1.2"/><line x1="1384" y1="1068.9" x2="2272" y2="1068.9" stroke="#f3f3f3" stroke-width="1.2"/><line x1="1384" y1="1189" x2="2272" y2="1189" stroke="#f3f3f3" stroke-width="1.2"/><line x1="1384" y1="1309.1" x2="2272" y2="1309.1" stroke="#f3f3f3" stroke-width="1.2"/><line x1="1384" y1="1429.3" x2="2272" y2="1429.3" stroke="#f3f3f3" stroke-width="1.2"/><line x1="1384" y1="1549.4" x2="2272" y2="1549.4" stroke="#f3f3f3" stroke-width="1.2"/><line x1="1625.6" y1="978" x2="1625.6" y2="1600" stroke="#e3e3e3" stroke-width="2.2"/><line x1="1878" y1="978" x2="1878" y2="1600" stroke="#e3e3e3" stroke-width="2.2"/><line x1="2130.4" y1="978" x2="2130.4" y2="1600" stroke="#e3e3e3" stroke-width="2.2"/><line x1="1384" y1="1008.9" x2="2272" y2="1008.9" stroke="#e3e3e3" stroke-width="2.2"/><line x1="1377.5" y1="1008.9" x2="1384" y2="1008.9" stroke="#333333" stroke-width="2.2"/><text x="1372.5" y="1015.8" text-anchor="end" font-family="Liberation Sans" font-size="19.4" fill="#4d4d4d">35</text><line x1="1384" y1="1129" x2="2272" y2="1129" stroke="#e3e3e3" stroke-width="2.2"/><line x1="1377.5" y1="1129" x2="1384" y2="1129" stroke="#333333" stroke-width="2.2"/><text x="1372.5" y="1135.9" text-anchor="end" font-family="Liberation Sans" font-size="19.4" fill="#4d4d4d">30</text><line x1="1384" y1="1249.1" x2="2272" y2="1249.1" stroke="#e3e3e3" stroke-width="2.2"/><line x1="1377.5" y1="1249.1" x2="1384" y2="1249.1" stroke="#333333" stroke-width="2.2"/><text x="1372.5" y="1256.0" text-anchor="end" font-family="Liberation Sans" font-size="19.4" fill="#4d4d4d">25</text><line x1="1384" y1="1369.2" x2="2272" y2="1369.2" stroke="#e3e3e3" stroke-width="2.2"/><line x1="1377.5" y1="1369.2" x2="1384" y2="1369.2" stroke="#333333" stroke-width="2.2"/><text x="1372.5" y="1376.1000000000001" text-anchor="end" font-family="Liberation Sans" font-size="19.4" fill="#4d4d4d">20</text><line x1="1384" y1="1489.3" x2="2272" y2="1489.3" stroke="#e3e3e3" stroke-width="2.2"/><line x1="1377.5" y1="1489.3" x2="1384" y2="1489.3" stroke="#333333" stroke-width="2.2"/><text x="1372.5" y="1496.2" text-anchor="end" font-family="Liberation Sans" font-size="19.4" fill="#4d4d4d">15</text><circle cx="2231.4" cy="1008.9" r="4.9" fill="#8e6c9e" stroke="#71567e" stroke-width="1.4"/><circle cx="2231.4" cy="1056.9" r="4.9" fill="#8e6c9e" stroke="#71567e" stroke-width="1.4"/><circle cx="2155.6" cy="1153.0" r="4.9" fill="#8e6c9e" stroke="#71567e" stroke-width="1.4"/><circle cx="1953.7" cy="1177.0" r="4.9" fill="#8e6c9e" stroke="#71567e" stroke-width="1.4"/><circle cx="2054.7" cy="1177.0" r="4.9" fill="#8e6c9e" stroke="#71567e" stroke-width="1.4"/><circle cx="1979.0" cy="1225.1" r="4.9" fill="#8e6c9e" stroke="#71567e" stroke-width="1.4"/><circle cx="2004.2" cy="1225.1" r="4.9" fill="#5c2a6e" stroke="#492158" stroke-width="1.4"/><circle cx="1928.5" cy="1249.1" r="4.9" fill="#8e6c9e" stroke="#71567e" stroke-width="1.4"/><circle cx="2029.4" cy="1249.1" r="4.9" fill="#8e6c9e" stroke="#71567e" stroke-width="1.4"/><circle cx="1878.0" cy="1273.1" r="4.9" fill="#8e6c9e" stroke="#71567e" stroke-width="1.4"/><circle cx="1928.5" cy="1273.1" r="4.9" fill="#5c2a6e" stroke="#492158" stroke-width="1.4"/><circle cx="1953.7" cy="1273.1" r="4.9" fill="#8e6c9e" stroke="#71567e" stroke-width="1.4"/><circle cx="2029.4" cy="1273.1" r="4.9" fill="#8e6c9e" stroke="#71567e" stroke-width="1.4"/><circle cx="1852.8" cy="1297.1" r="4.9" fill="#8e6c9e" stroke="#71567e" stroke-width="1.4"/><circle cx="1903.2" cy="1297.1" r="4.9" fill="#8e6c9e" stroke="#71567e" stroke-width="1.4"/><circle cx="1928.5" cy="1297.1" r="4.9" fill="#8e6c9e" stroke="#71567e" stroke-width="1.4"/><circle cx="1852.8" cy="1321.2" r="4.9" fill="#5c2a6e" stroke="#492158" stroke-width="1.4"/><circle cx="1878.0" cy="1321.2" r="4.9" fill="#8e6c9e" stroke="#71567e" stroke-width="1.4"/><circle cx="1903.2" cy="1321.2" r="4.9" fill="#8e6c9e" stroke="#71567e" stroke-width="1.4"/><circle cx="1777.0" cy="1345.2" r="4.9" fill="#8e6c9e" stroke="#71567e" stroke-width="1.4"/><circle cx="1802.3" cy="1345.2" r="4.9" fill="#5c2a6e" stroke="#492158" stroke-width="1.4"/><circle cx="1852.8" cy="1345.2" r="4.9" fill="#3b0a4b" stroke="#2f083c" stroke-width="1.4"/><circle cx="1878.0" cy="1345.2" r="4.9" fill="#5c2a6e" stroke="#492158" stroke-width="1.4"/><circle cx="1903.2" cy="1345.2" r="4.9" fill="#3b0a4b" stroke="#2f083c" stroke-width="1.4"/><circle cx="1751.8" cy="1369.2" r="4.9" fill="#8e6c9e" stroke="#71567e" stroke-width="1.4"/><circle cx="1777.0" cy="1369.2" r="4.9" fill="#8e6c9e" stroke="#71567e" stroke-width="1.4"/><circle cx="1802.3" cy="1369.2" r="4.9" fill="#3b0a4b" stroke="#2f083c" stroke-width="1.4"/><circle cx="1827.5" cy="1369.2" r="4.9" fill="#463c7c" stroke="#383063" stroke-width="1.4"/><circle cx="1852.8" cy="1369.2" r="4.9" fill="#8796b9" stroke="#6c7894" stroke-width="1.4"/><circle cx="1903.2" cy="1369.2" r="4.9" fill="#8e6c9e" stroke="#71567e" stroke-width="1.4"/><circle cx="1751.8" cy="1393.2" r="4.9" fill="#3d1f5c" stroke="#301849" stroke-width="1.4"/><circle cx="1777.0" cy="1393.2" r="4.9" fill="#3b0a4b" stroke="#2f083c" stroke-width="1.4"/><circle cx="1802.3" cy="1393.2" r="4.9" fill="#36546f" stroke="#2b4358" stroke-width="1.4"/><circle cx="1827.5" cy="1393.2" r="4.9" fill="#3f4872" stroke="#32395b" stroke-width="1.4"/><circle cx="1852.8" cy="1393.2" r="4.9" fill="#8e6c9e" stroke="#71567e" stroke-width="1.4"/><circle cx="1701.3" cy="1417.2" r="4.9" fill="#8e6c9e" stroke="#71567e" stroke-width="1.4"/><circle cx="1726.6" cy="1417.2" r="4.9" fill="#5c2a6e" stroke="#492158" stroke-width="1.4"/><circle cx="1751.8" cy="1417.2" r="4.9" fill="#56507f" stroke="#444065" stroke-width="1.4"/><circle cx="1777.0" cy="1417.2" r="4.9" fill="#208079" stroke="#196660" stroke-width="1.4"/><circle cx="1802.3" cy="1417.2" r="4.9" fill="#3a6c80" stroke="#2e5666" stroke-width="1.4"/><circle cx="1827.5" cy="1417.2" r="4.9" fill="#7cc0b8" stroke="#639993" stroke-width="1.4"/><circle cx="1852.8" cy="1417.2" r="4.9" fill="#3c2c5f" stroke="#30234c" stroke-width="1.4"/><circle cx="1676.1" cy="1441.3" r="4.9" fill="#544b7a" stroke="#433c61" stroke-width="1.4"/><circle cx="1726.6" cy="1441.3" r="4.9" fill="#1f857f" stroke="#186a65" stroke-width="1.4"/><circle cx="1751.8" cy="1441.3" r="4.9" fill="#339890" stroke="#287973" stroke-width="1.4"/><circle cx="1777.0" cy="1441.3" r="4.9" fill="#3a9b94" stroke="#2e7c76" stroke-width="1.4"/><circle cx="1802.3" cy="1441.3" r="4.9" fill="#7cc0b8" stroke="#639993" stroke-width="1.4"/><circle cx="1625.6" cy="1465.3" r="4.9" fill="#2e5a78" stroke="#244860" stroke-width="1.4"/><circle cx="1676.1" cy="1465.3" r="4.9" fill="#4ca39d" stroke="#3c827d" stroke-width="1.4"/><circle cx="1701.3" cy="1465.3" r="4.9" fill="#2f8f82" stroke="#257268" stroke-width="1.4"/><circle cx="1726.6" cy="1465.3" r="4.9" fill="#4ca39d" stroke="#3c827d" stroke-width="1.4"/><circle cx="1751.8" cy="1465.3" r="4.9" fill="#c8a852" stroke="#a08641" stroke-width="1.4"/><circle cx="1777.0" cy="1465.3" r="4.9" fill="#3f9a6c" stroke="#327b56" stroke-width="1.4"/><circle cx="1549.9" cy="1489.3" r="4.9" fill="#2b8a86" stroke="#226e6b" stroke-width="1.4"/><circle cx="1575.1" cy="1489.3" r="4.9" fill="#6db5ae" stroke="#57908b" stroke-width="1.4"/><circle cx="1600.4" cy="1489.3" r="4.9" fill="#1e8580" stroke="#186a66" stroke-width="1.4"/><circle cx="1625.6" cy="1489.3" r="4.9" fill="#3e1a5c" stroke="#311449" stroke-width="1.4"/><circle cx="1650.8" cy="1489.3" r="4.9" fill="#b7d152" stroke="#92a741" stroke-width="1.4"/><circle cx="1676.1" cy="1489.3" r="4.9" fill="#dcdc2e" stroke="#b0b024" stroke-width="1.4"/><circle cx="1701.3" cy="1489.3" r="4.9" fill="#fde02a" stroke="#cab321" stroke-width="1.4"/><circle cx="1726.6" cy="1489.3" r="4.9" fill="#bad554" stroke="#94aa43" stroke-width="1.4"/><circle cx="1751.8" cy="1489.3" r="4.9" fill="#93c44a" stroke="#759c3b" stroke-width="1.4"/><circle cx="1549.9" cy="1513.3" r="4.9" fill="#8aba3a" stroke="#6e942e" stroke-width="1.4"/><circle cx="1575.1" cy="1513.3" r="4.9" fill="#7dbfb8" stroke="#649893" stroke-width="1.4"/><circle cx="1600.4" cy="1513.3" r="4.9" fill="#fde725" stroke="#cab81d" stroke-width="1.4"/><circle cx="1625.6" cy="1513.3" r="4.9" fill="#6fb24c" stroke="#588e3c" stroke-width="1.4"/><circle cx="1524.6" cy="1537.3" r="4.9" fill="#fee95a" stroke="#cbba48" stroke-width="1.4"/><circle cx="1549.9" cy="1537.3" r="4.9" fill="#f9e11d" stroke="#c7b417" stroke-width="1.4"/><circle cx="1575.1" cy="1537.3" r="4.9" fill="#fde32c" stroke="#cab523" stroke-width="1.4"/><circle cx="1600.4" cy="1537.3" r="4.9" fill="#a8c843" stroke="#86a035" stroke-width="1.4"/><circle cx="1524.6" cy="1561.4" r="4.9" fill="#fde32c" stroke="#cab523" stroke-width="1.4"/><circle cx="1549.9" cy="1561.4" r="4.9" fill="#fde32c" stroke="#cab523" stroke-width="1.4"/><circle cx="1575.1" cy="1561.4" r="4.9" fill="#fde32c" stroke="#cab523" stroke-width="1.4"/><rect x="1383.5" y="977.9" width="889.2" height="720" fill="none" stroke="#6b6b6b" stroke-width="2.2"/><text transform="translate(1334,1322) rotate(-90)" text-anchor="middle" font-family="Liberation Sans" font-size="22.8" fill="#000">cty</text><text x="2306.5" y="1192.7" font-family="Liberation Sans" font-size="22.8" fill="#000">cyl</text><defs><linearGradient id="vir" x1="0" y1="1" x2="0" y2="0"><stop offset="0" stop-color="#440154"/><stop offset="0.1" stop-color="#482475"/><stop offset="0.2" stop-color="#414487"/><stop offset="0.3" stop-color="#355f8d"/><stop offset="0.4" stop-color="#2a788e"/><stop offset="0.5" stop-color="#21918c"/><stop offset="0.6" stop-color="#22a884"/><stop offset="0.7" stop-color="#44bf70"/><stop offset="0.8" stop-color="#7ad151"/><stop offset="0.9" stop-color="#bddf26"/><stop offset="1" stop-color="#fde725"/></linearGradient></defs><rect x="2306" y="1211.1" width="30" height="246" fill="url(#vir)"/><line x1="2306" y1="1212.2" x2="2316.5" y2="1212.2" stroke="#d0d0d0" stroke-width="2"/><line x1="2306" y1="1273.7" x2="2316.5" y2="1273.7" stroke="#d0d0d0" stroke-width="2"/><line x1="2306" y1="1333.5" x2="2316.5" y2="1333.5" stroke="#d0d0d0" stroke-width="2"/><line x1="2306" y1="1395.1" x2="2316.5" y2="1395.1" stroke="#d0d0d0" stroke-width="2"/><line x1="2306" y1="1457" x2="2316.5" y2="1457" stroke="#d0d0d0" stroke-width="2"/></svg>
</div></body></html>
